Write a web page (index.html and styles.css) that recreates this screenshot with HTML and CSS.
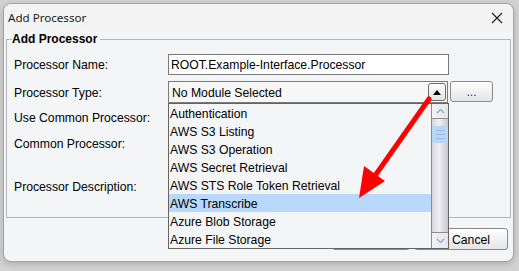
FILE: index.html
```html
<!DOCTYPE html>
<html lang="en">
<head>
    <meta charset="UTF-8">
    <title>Add Processor</title>
    <link rel="stylesheet" href="styles.css">
</head>
<body>

<div class="window">
    <div class="titlebar">
        <span class="title">Add Processor</span>
        <svg class="close" width="12" height="12" viewBox="0 0 12 12">
            <path d="M1 1 L11 11 M11 1 L1 11" stroke="#1a1a1a" stroke-width="1.1" fill="none"/>
        </svg>
    </div>

    <fieldset class="group">
        <legend>Add Processor</legend>
        <div class="form">
            <label class="lbl">Processor Name:</label>
            <div class="field-text">ROOT.Example-Interface.Processor</div>

            <label class="lbl">Processor Type:</label>
            <div class="type-row">
                <div class="combo">
                    <span class="combo-value">No Module Selected</span>
                    <span class="combo-btn"><span class="tri-up"></span></span>
                </div>
                <button class="btn dots">...</button>
            </div>

            <label class="lbl">Use Common Processor:</label>
            <div></div>

            <label class="lbl">Common Processor:</label>
            <div></div>

            <label class="lbl">Processor Description:</label>
            <div></div>
        </div>
    </fieldset>

    <div class="actions">
        <button class="btn action">OK</button>
        <button class="btn action cancel">Cancel</button>
    </div>

    <div class="popup">
        <ul class="options">
            <li>Authentication</li>
            <li>AWS S3 Listing</li>
            <li>AWS S3 Operation</li>
            <li>AWS Secret Retrieval</li>
            <li>AWS STS Role Token Retrieval</li>
            <li class="selected">AWS Transcribe</li>
            <li>Azure Blob Storage</li>
            <li>Azure File Storage</li>
        </ul>
        <div class="scrollbar">
            <div class="sb-btn">
                <svg width="9" height="6" viewBox="0 0 9 6"><path d="M1 5 L4.5 1.5 L8 5" stroke="#7fa7d8" stroke-width="1.2" fill="none"/></svg>
            </div>
            <div class="sb-track">
                <div class="sb-thumb"><span></span><span></span><span></span></div>
            </div>
            <div class="sb-btn">
                <svg width="9" height="6" viewBox="0 0 9 6"><path d="M1 1 L4.5 4.5 L8 1" stroke="#7fa7d8" stroke-width="1.2" fill="none"/></svg>
            </div>
        </div>
    </div>
</div>

<svg class="arrow" width="519" height="271" viewBox="0 0 519 271">
    <line x1="429" y1="99" x2="372" y2="180" stroke="#ff0000" stroke-width="5" stroke-linecap="round"/>
    <polygon points="359,198 364,166 385,181" fill="#ff0000"/>
</svg>

</body>
</html>
```

FILE: styles.css
```css
body {
    margin: 0;
    width: 519px;
    height: 271px;
    background: #d2d2d2;
    font-family: 'Liberation Sans', Arial, sans-serif;
    font-size: 12.2px;
    color: #000;
    position: relative;
    overflow: hidden;
}
.window {
    position: relative;
    margin: 3px 0 0 3px;
    width: 509px;
    height: 257px;
    border: 1px solid #a4a4a4;
    border-radius: 8px;
    background: #f4f5f7;
    box-shadow: 0 2px 6px rgba(0, 0, 0, 0.18);
    display: flex;
    flex-direction: column;
}
.titlebar {
    height: 26px;
    display: flex;
    align-items: center;
    justify-content: space-between;
    padding: 0 10px 0 4px;
    background: #f3f3f3;
    border-radius: 8px 8px 0 0;
}
.title {
    font-family: 'Noto Sans', 'Open Sans', sans-serif;
    font-size: 11.6px;
    color: #1a1a1a;
}
.close {
    margin-top: 1px;
}
.group {
    margin: 1px 2px 0 2px;
    padding: 0 0 0 5px;
    border: 1px solid #b4b4b4;
    min-width: 0;
}
.group legend {
    padding: 0 3px 0 0;
    font-weight: bold;
    font-size: 12px;
    line-height: 16px;
    color: #000;
}
.form {
    display: grid;
    grid-template-columns: 154px 1fr;
    grid-template-rows: 27px 22px 28px 24px 62px;
    padding: 7px 0 0 2px;
}
.lbl {
    align-self: center;
    line-height: 15px;
    padding-top: 2px;
}
.form .lbl:nth-of-type(1) {
    align-self: start;
    margin-top: 2px;
}
.field-text {
    height: 19px;
    border: 1px solid #7a7a7a;
    background: #fff;
    line-height: 20px;
    padding-left: 2px;
    width: 277px;
}
.type-row {
    display: flex;
    gap: 2px;
}
.combo {
    width: 278px;
    height: 20px;
    border: 1px solid #7a7a7a;
    background: #f7f7f7;
    display: flex;
    align-items: center;
    justify-content: space-between;
}
.combo-value {
    padding: 2px 0 0 3px;
}
.combo-btn {
    width: 16px;
    height: 16px;
    margin-right: 1px;
    border: 1px solid #6e6e6e;
    border-radius: 3px;
    background: linear-gradient(#ffffff, #e2e2e2);
    display: flex;
    align-items: center;
    justify-content: center;
}
.tri-up {
    width: 0;
    height: 0;
    border-left: 4px solid transparent;
    border-right: 4px solid transparent;
    border-bottom: 5px solid #000;
}
.btn {
    font-family: 'Liberation Sans', Arial, sans-serif;
    font-size: 12.2px;
    color: #000;
    border: 1px solid #8a8a8a;
    border-radius: 3px;
    background: linear-gradient(#ffffff, #e4e4e4);
    padding: 0;
}
.dots {
    width: 43px;
    height: 21px;
    color: #3a2a9a;
    line-height: 14px;
}
.actions {
    display: flex;
    justify-content: flex-end;
    gap: 4px;
    margin-top: 10px;
    padding-right: 5px;
}
.action {
    width: 78px;
    height: 22px;
}
.cancel {
    width: 94px;
    padding: 1px 0 0 20px;
}
.popup {
    position: absolute;
    left: 164px;
    top: 99px;
    width: 279px;
    height: 144px;
    border: 1px solid #646464;
    background: #f4f5f7;
    display: flex;
}
.options {
    list-style: none;
    margin: 0;
    padding: 0;
    flex: 1;
}
.options li {
    height: 18px;
    line-height: 20px;
    padding-left: 1px;
    white-space: nowrap;
}
.options li.selected {
    background: #b8d8fc;
}
.scrollbar {
    width: 16px;
    border-left: 1px solid #8c8c8c;
    display: flex;
    flex-direction: column;
}
.sb-btn {
    height: 14px;
    border-bottom: 1px solid #8c8c8c;
    background: linear-gradient(90deg, #f2f2f4, #e6e6ea);
    display: flex;
    align-items: center;
    justify-content: center;
}
.sb-btn:last-child {
    height: 15px;
    border-bottom: none;
    border-top: 1px solid #8c8c8c;
}
.sb-track {
    flex: 1;
    background: linear-gradient(90deg, #d6d6dc, #f1f1f4 45%, #c6c6ce);
    padding-top: 7px;
}
.sb-thumb {
    height: 17px;
    background: #b9d6f6;
    display: flex;
    flex-direction: column;
    align-items: center;
    justify-content: center;
    gap: 3px;
}
.sb-thumb span {
    width: 9px;
    height: 1px;
    background: #98bce4;
}
.arrow {
    position: absolute;
    left: 0;
    top: 0;
    pointer-events: none;
}
```
